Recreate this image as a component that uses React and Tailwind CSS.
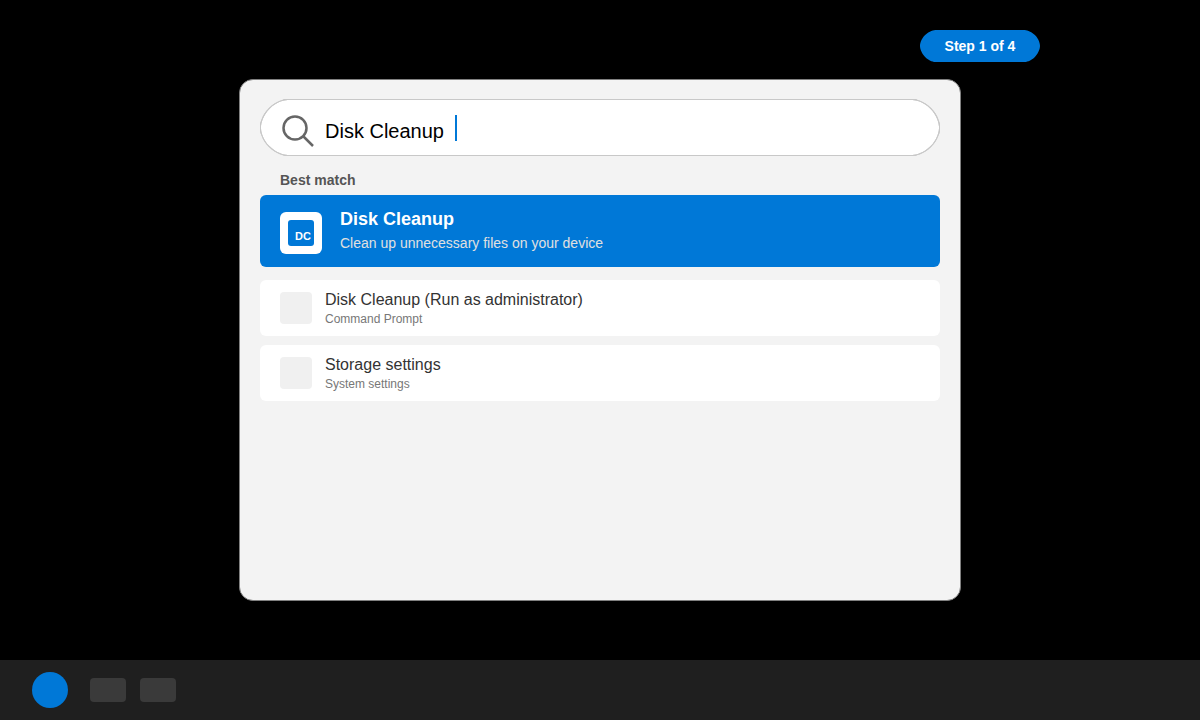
import { useState } from "react";

const results = [
  {
    id: 1,
    title: "Disk Cleanup (Run as administrator)",
    subtitle: "Command Prompt",
  },
  {
    id: 2,
    title: "Storage settings",
    subtitle: "System settings",
  },
];

function StepBadge({ step, total }) {
  return (
    <div className="w-[120px] h-8 flex items-center justify-center rounded-[16px] [corner-shape:superellipse(0.85)] bg-[#0078d7] text-sm font-bold text-white">
      Step {step} of {total}
    </div>
  );
}

function SearchBox({ value, onChange }) {
  return (
    <label className="flex items-center h-[57px] px-5 rounded-[28px] [corner-shape:superellipse(0.85)] border border-[#c8c8c8] bg-white">
      <svg
        className="w-9 h-9 mt-1 shrink-0"
        viewBox="0 0 36 36"
        fill="none"
        stroke="#666666"
        strokeWidth="2.5"
        aria-hidden="true"
      >
        <circle cx="14" cy="16" r="11.5" />
        <path d="M22 24 32 34" />
      </svg>
      <input
        type="text"
        aria-label="Search"
        className="w-[130px] h-7 ml-2 mt-1.5 p-0 bg-transparent text-xl text-black outline-none"
        value={value}
        onChange={(e) => onChange(e.target.value)}
      />
      <span className="w-0.5 h-[26px] bg-[#0078d7]" />
    </label>
  );
}

function BestMatch() {
  return (
    <button
      type="button"
      className="w-full h-[72px] px-5 flex items-center gap-[18px] rounded-md bg-[#0078d7] text-left"
    >
      <span className="w-[42px] h-[42px] mt-1 flex items-center justify-center rounded-md bg-white">
        <span className="w-[26px] h-[26px] pl-1 pt-1.5 flex items-center justify-center rounded-[3px] bg-[#0078d7] text-[11px] font-bold text-white">
          DC
        </span>
      </span>
      <span className="flex flex-col">
        <span className="text-lg leading-6 font-bold text-white">
          Disk Cleanup
        </span>
        <span className="text-sm leading-6 text-[#e0e0e0]">
          Clean up unnecessary files on your device
        </span>
      </span>
    </button>
  );
}

function ResultItem({ title, subtitle }) {
  return (
    <button
      type="button"
      className="w-full h-14 px-5 flex items-center gap-[13px] rounded-md bg-white text-left"
    >
      <span className="w-8 h-8 rounded bg-[#f0f0f0]" />
      <span className="flex flex-col pt-0.5">
        <span className="text-base leading-5 text-[#333333]">{title}</span>
        <span className="text-xs leading-[18px] text-[#777777]">
          {subtitle}
        </span>
      </span>
    </button>
  );
}

function Taskbar() {
  return (
    <nav className="mt-auto h-[60px] px-8 flex items-center bg-[#1f1f1f]">
      <button
        type="button"
        aria-label="Start"
        className="w-9 h-9 rounded-full bg-[#0078d7]"
      />
      <div className="ml-[22px] flex gap-3.5">
        <button
          type="button"
          aria-label="Pinned app 1"
          className="w-9 h-6 rounded bg-[#3a3a3a]"
        />
        <button
          type="button"
          aria-label="Pinned app 2"
          className="w-9 h-6 rounded bg-[#3a3a3a]"
        />
      </div>
    </nav>
  );
}

function App() {
  const [query, setQuery] = useState("Disk Cleanup");

  return (
    <div className="min-h-screen flex flex-col bg-black font-['Liberation_Sans',Arial,sans-serif]">
      <header className="pt-[30px] pr-40 flex justify-end">
        <StepBadge step={1} total={4} />
      </header>

      <main className="w-full max-w-[722px] min-h-[522px] mt-[17px] mx-auto px-5 pt-[19px] pb-5 rounded-[14px] border border-[#808080] bg-[#f3f3f3]">
        <SearchBox value={query} onChange={setQuery} />
        <h2 className="mt-3.5 pl-5 text-sm leading-5 font-bold text-[#555555]">
          Best match
        </h2>
        <div className="mt-[5px]">
          <BestMatch />
        </div>
        <ul className="mt-[13px] flex flex-col gap-[9px]">
          {results.map((item) => (
            <li key={item.id}>
              <ResultItem title={item.title} subtitle={item.subtitle} />
            </li>
          ))}
        </ul>
      </main>

      <Taskbar />
    </div>
  );
}

export default App;
